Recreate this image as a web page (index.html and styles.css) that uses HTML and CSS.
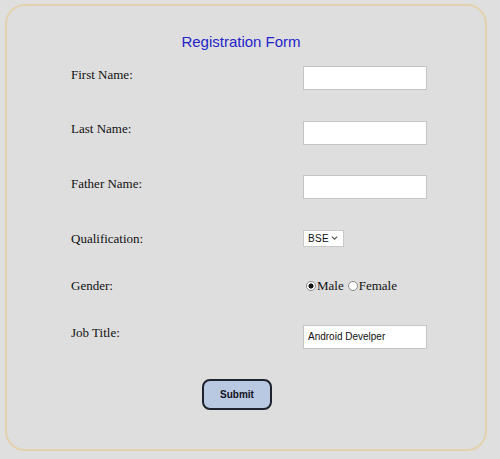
FILE: index.html
```html
<!DOCTYPE html>
<html>
<head>
<meta charset="utf-8">
<link rel="stylesheet" href="styles.css">
</head>
<body>
<div class="card">
  <h1 class="title">Registration Form</h1>
  <form class="grid">
    <div class="label up">First Name:</div>
    <div class="field"><input class="text" type="text"></div>
    <div class="label up">Last Name:</div>
    <div class="field"><input class="text" type="text"></div>
    <div class="label up">Father Name:</div>
    <div class="field"><input class="text" type="text"></div>
    <div class="label">Qualification:</div>
    <div class="field"><select class="select"><option>BSE</option></select></div>
    <div class="label">Gender:</div>
    <div class="field radios">
      <label class="opt"><input class="radio" type="radio" name="g" checked>Male</label>
      <label class="opt"><input class="radio" type="radio" name="g">Female</label>
    </div>
    <div class="label up">Job Title:</div>
    <div class="field"><input class="text" type="text" value="Android Develper"></div>
  </form>
  <div class="actions"><button class="submit" type="button">Submit</button></div>
</div>
</body>
</html>
```
FILE: styles.css
```css
html, body {
  margin: 0;
  padding: 0;
  background: #dfdfdf;
}
body {
  width: 500px;
  height: 459px;
  overflow: hidden;
  padding: 4px 0 0 5px;
  box-sizing: border-box;
}
.card {
  width: 482px;
  height: 447px;
  box-sizing: border-box;
  border: 2px solid #e4d1ad;
  border-radius: 20px;
  background: #dedede;
  padding-top: 27px;
}
.title {
  margin: 0;
  text-align: center;
  font-family: "Liberation Sans", Arial, sans-serif;
  font-weight: normal;
  font-size: 15px;
  line-height: 18px;
  color: #2424c8;
  padding-right: 10px;
}
.grid {
  margin: 0;
  padding-left: 64px;
  display: grid;
  grid-template-columns: 232px 1fr;
  grid-template-rows: 54px 55px 54px 48px 47px 55px;
  align-items: center;
}
.label {
  font-family: "Liberation Serif", "Times New Roman", serif;
  font-size: 13px;
  line-height: 15px;
  color: #111;
}
.label.up {
  margin-bottom: 8px;
}
.field {
  display: flex;
  align-items: center;
}
.text {
  width: 124px;
  height: 24px;
  box-sizing: border-box;
  margin: 0;
  border: 1px solid #c4c4c4;
  background: #fff;
  padding: 0 4px;
  font-family: "Liberation Sans", Arial, sans-serif;
  font-size: 10px;
  color: #111;
  outline: none;
}
.select {
  appearance: none;
  -webkit-appearance: none;
  width: 41px;
  height: 17px;
  box-sizing: border-box;
  margin: 0;
  border: 1px solid #c8c8c8;
  border-radius: 0;
  padding: 0 0 0 4px;
  font-family: "Liberation Sans", Arial, sans-serif;
  font-size: 10px;
  letter-spacing: 0.3px;
  color: #111;
  background: #fff url("data:image/svg+xml,%3Csvg xmlns='http://www.w3.org/2000/svg' width='7' height='4' viewBox='0 0 7 4'%3E%3Cpath d='M0.8 0.6l2.7 2.6 2.7-2.6' fill='none' stroke='%23555' stroke-width='1.1'/%3E%3C/svg%3E") no-repeat right 5px center;
}
.radios {
  padding-left: 3px;
  font-family: "Liberation Serif", "Times New Roman", serif;
  font-size: 13px;
  color: #111;
  gap: 4px;
}
.opt {
  display: flex;
  align-items: center;
}
.radio {
  appearance: none;
  -webkit-appearance: none;
  width: 10px;
  height: 10px;
  margin: 0 1px 0 0;
  box-sizing: border-box;
  border: 1px solid #8a8a8a;
  border-radius: 50%;
  background: #fff;
}
.radio:checked {
  background: radial-gradient(circle, #111 0 2.3px, #fff 2.8px);
}
.actions {
  display: flex;
  justify-content: center;
  margin-top: 15px;
  padding-right: 18px;
}
.submit {
  width: 70px;
  height: 31px;
  box-sizing: border-box;
  border: 2px solid #1e232e;
  border-radius: 8px;
  background: #b9c9e1;
  font-family: "Liberation Sans", Arial, sans-serif;
  font-weight: bold;
  font-size: 10px;
  color: #111122;
  padding: 0;
}
```
